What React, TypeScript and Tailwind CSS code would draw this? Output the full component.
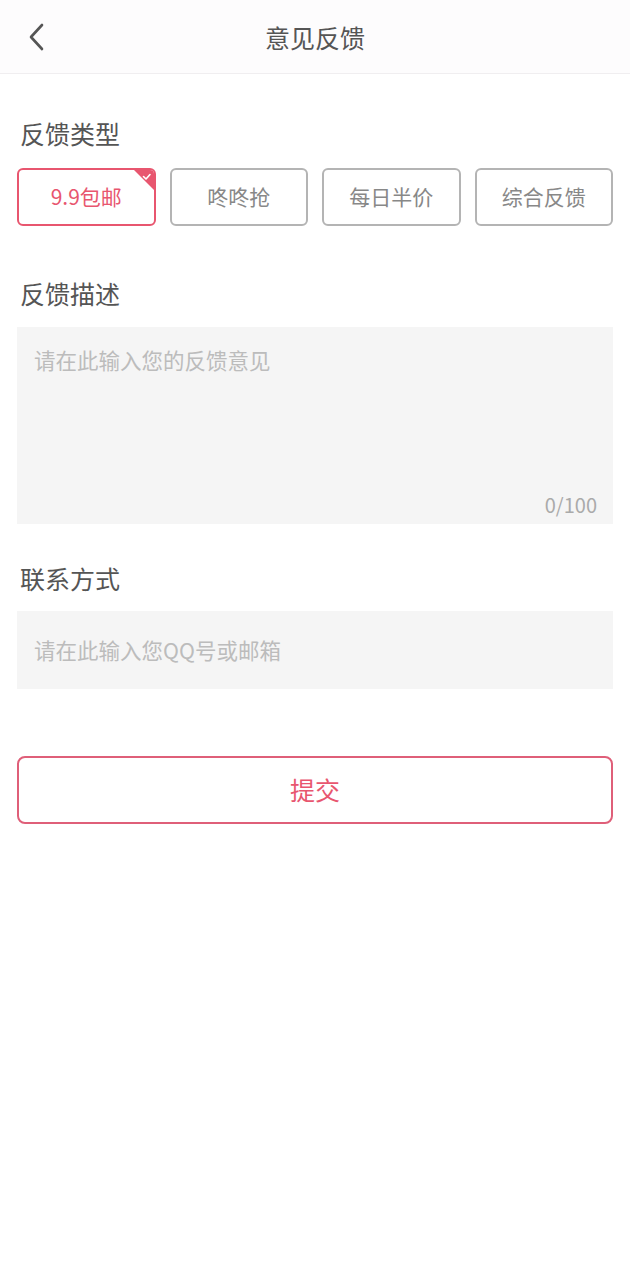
import React, { useState } from 'react';

const types = ['9.9包邮', '咚咚抢', '每日半价', '综合反馈'];

const font = { fontFamily: '"Noto Sans CJK SC", "Noto Sans", sans-serif' };

const App = () => {
  const [active, setActive] = useState(0);
  const [desc, setDesc] = useState('');
  const [contact, setContact] = useState('');

  return (
    <div className="min-h-screen w-[630px] bg-white" style={font}>
      {/* Header */}
      <div className="relative flex h-[74px] items-center justify-center border-b border-[#f0eef0] bg-[#fdfcfd]">
        <button className="absolute left-[24px] top-[22px] flex h-[30px] w-[24px] items-center justify-center">
          <svg width="18" height="28" viewBox="0 0 18 28" fill="none">
            <path d="M15 2 L4 14 L15 26" stroke="#555" strokeWidth="2.6" strokeLinecap="round" strokeLinejoin="round" />
          </svg>
        </button>
        <h1 className="text-[25px] leading-[34px] text-[#555]">意见反馈</h1>
      </div>

      <div className="px-[17px]">
        {/* Type */}
        <div className="ml-[3px] mt-[42px] text-[25px] leading-[34px] text-[#555]">反馈类型</div>
        <div className="mt-[18px] flex gap-[14px]">
          {types.map((t, i) => (
            <button
              key={t}
              onClick={() => setActive(i)}
              className={
                i === active
                  ? 'relative flex h-[58px] flex-1 items-center justify-center overflow-hidden rounded-[6px] border-2 border-[#e8566f] text-[21px] text-[#e8566f]'
                  : 'relative flex h-[58px] flex-1 items-center justify-center overflow-hidden rounded-[6px] border-2 border-[#b4b4b4] text-[21px] text-[#888]'
              }
            >
              {t}
              {i === active && (
                <svg className="absolute right-0 top-0" width="20" height="20" viewBox="0 0 20 20">
                  <polygon points="0,0 20,0 20,20" fill="#e8566f" />
                  <path d="M9.5 6.5 L12 9 L16 4.5" stroke="#fff" strokeWidth="1.6" fill="none" strokeLinecap="round" strokeLinejoin="round" />
                </svg>
              )}
            </button>
          ))}
        </div>

        {/* Description */}
        <div className="ml-[3px] mt-[50px] text-[25px] leading-[34px] text-[#555]">反馈描述</div>
        <div className="relative mt-[17px] h-[197px] bg-[#f5f5f5]">
          <textarea
            value={desc}
            maxLength={100}
            onChange={e => setDesc(e.target.value)}
            placeholder="请在此输入您的反馈意见"
            className="h-full w-full resize-none bg-transparent px-[17px] pt-[17px] text-[21.5px] leading-[32px] text-[#555] outline-none placeholder:text-[#bcbcbc]"
            style={font}
          />
          <span className="absolute bottom-[5px] right-[16px] text-[20px] leading-[28px] text-[#aaa]">{desc.length}/100</span>
        </div>

        {/* Contact */}
        <div className="ml-[3px] mt-[37px] text-[25px] leading-[34px] text-[#555]">联系方式</div>
        <div className="mt-[16px] flex h-[78px] items-center bg-[#f5f5f5]">
          <input
            value={contact}
            onChange={e => setContact(e.target.value)}
            placeholder="请在此输入您QQ号或邮箱"
            className="w-full bg-transparent px-[17px] text-[21.5px] leading-[32px] text-[#555] outline-none placeholder:text-[#bcbcbc]"
            style={font}
          />
        </div>

        {/* Submit */}
        <button className="mt-[67px] flex h-[68px] w-full items-center justify-center rounded-[8px] border-2 border-[#df5f79] text-[25px] text-[#e8566f]">
          提交
        </button>
      </div>
    </div>
  );
};

export default App;
